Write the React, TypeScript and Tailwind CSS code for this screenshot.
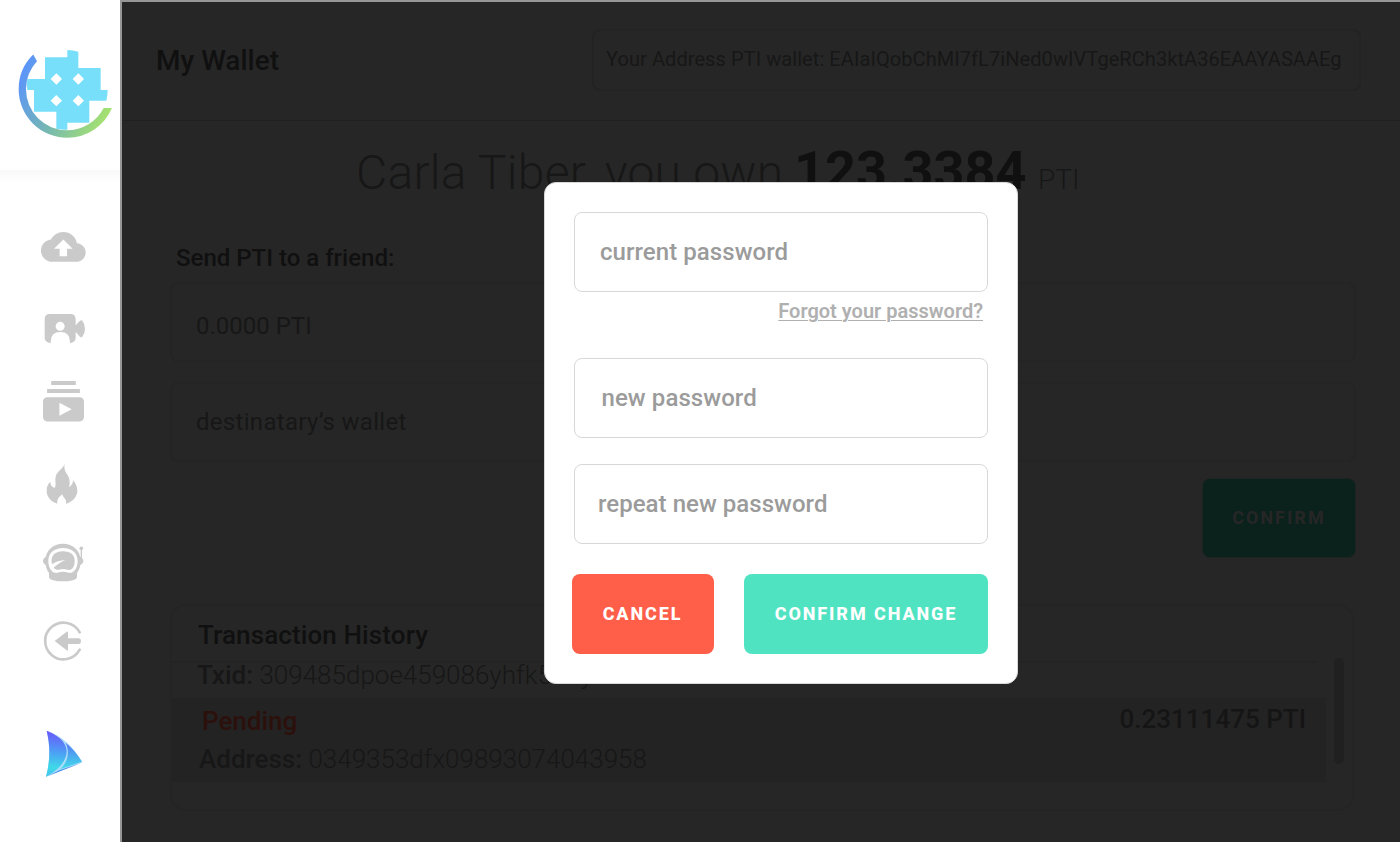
import React from "react";

const GREY = "#cacaca";

function Logo() {
  return (
    <svg width="120" height="110" viewBox="0 0 360 330">
      <defs>
        <linearGradient id="ring" gradientUnits="userSpaceOnUse" x1="60" y1="130" x2="330" y2="260">
          <stop offset="0" stopColor="#5b94fb" />
          <stop offset="0.5" stopColor="#76b8b0" />
          <stop offset="1" stopColor="#a8e46c" />
        </linearGradient>
      </defs>
      <path
        fill="#78dffa"
        d="M202 60Q219 60 235 65V114H302V180H323Q323 197 319 212H268V278H202V299Q185 300 169 296V245H102V180H82Q79 163 82 147H135V82H202Z"
      />
      <path
        fill="#fff"
        d="M169 130l17 17-17 17-17-17zM235 130l17 17-17 17-17-17zM169 195l17 17-17 17-17-17zM235 195l17 17-17 17-17-17z"
      />
      <path fill="url(#ring)" d="M99.700 73.700A145 145 0 0 0 56 178A145 145 0 0 0 201 323A145 145 0 0 0 335.900 234H311A124 124 0 0 1 201 301A123 123 0 0 1 78 178A123 123 0 0 1 111 94Z" />
    </svg>
  );
}

function UploadIcon() {
  return (
    <svg className="ml-[40.7px] overflow-visible" width="44.7" height="29.8" viewBox="0 4 24 16" fill={GREY}>
      <path d="M19.35 10.04C18.67 6.59 15.64 4 12 4 9.11 4 6.6 5.64 5.35 8.04 2.34 8.36 0 10.91 0 14c0 3.31 2.69 6 6 6h13c2.76 0 5-2.24 5-5 0-2.64-2.05-4.78-4.65-4.96zM14 13v4h-4v-4H7l5-5 5 5h-3z" />
    </svg>
  );
}

function CameraIcon() {
  return (
    <svg className="ml-[44px] overflow-visible" width="42" height="30" viewBox="72 296 126 90" fill={GREY}>
      <path d="M90 296H151Q167 296 167 312V330L180 316Q184 313 187 316Q195 326 195 340T187 364Q184 368 180 364L167 350V368Q167 380 150 384V379Q150 350 121 350T92 379V384Q74 380 74 368V312Q74 296 90 296Z" />
      <circle cx="120.500" cy="333" r="13.500" fill="#fff" />
    </svg>
  );
}

function SubscriptionsIcon() {
  return (
    <svg className="ml-[42.5px] overflow-visible" width="41" height="40.400" viewBox="2 2 20 20" preserveAspectRatio="none" fill={GREY}>
      <path d="M20 8H4V6h16v2zm-2-6H6v2h12V2zm4 10v8c0 1.1-.9 2-2 2H4c-1.1 0-2-.9-2-2v-8c0-1.1.9-2 2-2h16c1.1 0 2 .9 2 2zm-6 4l-6-3.270v6.530L16 16z" />
    </svg>
  );
}

function FireIcon() {
  return (
    <svg className="ml-[46px] overflow-visible" width="32" height="40" viewBox="78 42 96 120" fill={GREY}>
      <path d="M134 42C131 54 135 64 142 74C150 86 151 100 147 112C154 108 159 101 159 91C167 99 172 110 172 122C172 140 157 156 138 161C142 148 129 144 127 133C117 140 110 149 112 161C93 156 80 141 80 121C80 110 84 101 91 95C91 104 95 111 104 114C110 104 104 92 107 80C110 64 128 58 134 42Z" />
    </svg>
  );
}

function AstronautIcon() {
  return (
    <svg className="ml-[42px] overflow-visible" width="42" height="39" viewBox="66 280 126 117">
      <g fill={GREY}>
        <path d="M80 320Q69 326 69 334T80 347ZM178 320Q190 326 190 334T178 347Z" />
        <path d="M129 282C159 282 182 304 182 333C182 349 178 360 171 370V381C171 391 150 395 129 395S87 391 87 381V370C80 360 76 349 76 333C76 304 99 282 129 282Z" />
        <circle cx="184" cy="296" r="5.500" />
        <path d="M182 298h4v30h-4z" />
      </g>
      <path
        fill="#fff"
        d="M129 295C155 295 173 310 173 334C173 352 165 366 154 369C146 371 140 366 129 366S112 371 104 369C93 366 85 352 85 334C85 310 103 295 129 295Z"
      />
      <path
        fill={GREY}
        d="M129 305C153 305 164 317 164 334C164 350 157 361 148 361C142 361 138 358 129 358C116 359 110 364 101 354C111 345 121 338 136 331C121 332 107 336 96 344C90 321 103 305 129 305Z"
      />
    </svg>
  );
}

function LogoutIcon() {
  return (
    <svg className="ml-[43px] overflow-visible" width="40" height="40" viewBox="69 514 120 120">
      <path d="M179 548A55 55 0 1 0 179 600" fill="none" stroke={GREY} strokeWidth="8" strokeLinecap="round" />
      <path fill={GREY} d="M104 574L140 546Q144 544 144 549V566H177Q183 567 183 574.500T177 583H144V599Q144 605 140 602Z" />
    </svg>
  );
}

function SailIcon() {
  return (
    <svg className="ml-[45px] overflow-visible" width="39" height="48" viewBox="75 60 117 144">
      <defs>
        <linearGradient id="sail" x1="0.400" y1="0" x2="0.350" y2="1">
          <stop offset="0" stopColor="#6c55fb" />
          <stop offset="0.450" stopColor="#4d9df5" />
          <stop offset="0.800" stopColor="#3fd9e8" />
          <stop offset="1" stopColor="#42c4ee" />
        </linearGradient>
        <linearGradient id="jib" x1="0" y1="0" x2="0" y2="1">
          <stop offset="0" stopColor="#5876f6" />
          <stop offset="1" stopColor="#3fdde8" />
        </linearGradient>
      </defs>
      <path fill="#a8dcf8" d="M80 62C128 78 162 112 187 157L78 201C91 150 91 110 80 62Z" />
      <path fill="url(#sail)" d="M80 62C113 76 139 94 140 124C140 154 112 182 78 200C91 150 91 110 80 62Z" />
      <path fill="url(#jib)" d="M137 98C157 114 173 133 186 155L121 177C142 158 151 128 137 98Z" />
      <path fill="#4b8cf0" d="M84 198L118 181L186 158L120 184Z" />
    </svg>
  );
}

function Sidebar() {
  return (
    <aside className="flex h-full w-[120px] shrink-0 flex-col bg-white">
      <div className="h-[170px] pt-[30px]">
        <Logo />
      </div>
      <div className="h-[12px] bg-gradient-to-b from-[#f8f8f8] to-white" />
      <nav className="flex flex-col">
        <div className="h-[132px] pt-[49.700px]"><UploadIcon /></div>
        <div className="h-[67.300px]"><CameraIcon /></div>
        <div className="h-[82.700px]"><SubscriptionsIcon /></div>
        <div className="h-[79.300px]"><FireIcon /></div>
        <div className="h-[78px]"><AstronautIcon /></div>
        <div className="h-[108.700px]"><LogoutIcon /></div>
        <div><SailIcon /></div>
      </nav>
    </aside>
  );
}

function Wallet() {
  return (
    <main className="flex h-full flex-1 flex-col overflow-hidden border-l-2 border-t-2 border-[#969696] bg-[#262626] whitespace-nowrap">
      <header className="flex h-[119px] shrink-0 items-center justify-between border-b border-[#202020] pr-[39px] pb-[2px] pl-[34px]">
        <h1 className="pt-[2px] text-[28px] font-medium leading-8 text-[#101010]">My Wallet</h1>
        <div className="flex h-[62px] w-[769px] items-center rounded-lg border-2 border-[#232323] pb-[2px] pl-[12px] text-[20px] tracking-[0.075px] text-[#171717]">
          Your Address PTI wallet: EAIaIQobChMI7fL7iNed0wIVTgeRCh3ktA36EAAYASAAEg
        </div>
      </header>
      <div className="flex h-[110px] shrink-0 items-baseline pt-[18px] pl-[234px] text-[#171717]">
        <span className="w-[438px] text-[48px] font-light leading-[62px] tracking-[0.250px]">Carla Tiber, you own</span>
        <span className="w-[244px] text-[54px] font-bold leading-[64px] text-[#101010]">123.3384</span>
        <span className="text-[28px] font-light">PTI</span>
      </div>
      <section className="flex flex-col pr-[44px] pl-[48px]">
        <h2 className="h-[51px] pt-[11px] pl-[6px] text-[24px] font-medium leading-8 text-[#101010]">Send PTI to a friend:</h2>
        <div className="flex h-[80px] items-center rounded-lg border-2 border-[#242424] pt-[8px] pl-6 text-[24px] text-[#171717]">0.0000 PTI</div>
        <div className="mt-5 flex h-[80px] items-center rounded-lg border-2 border-[#242424] pl-6 text-[24px] tracking-[0.300px] text-[#171717]">destinatary’s wallet</div>
        <button className="mt-[16px] flex h-[80px] w-[154px] items-center justify-center self-end rounded-lg border border-[#1d2423] bg-[#0a211c] pb-[2px] text-[18px] font-extrabold tracking-[2px] text-[#262626]">CONFIRM</button>
      </section>
      <section className="mt-[46px] ml-[48px] flex h-[207px] w-[1184px] shrink-0 rounded-2xl border-2 border-[#242424]">
        <div className="w-[1154px]">
          <h2 className="h-[57px] w-[1144px] border-b-2 border-[#232323] pt-[13px] pl-[26px] text-[26px] font-medium leading-8 tracking-[0.120px] text-[#101010]">Transaction History</h2>
          <p className="h-[35px] pl-[25px] text-[26px] font-light leading-[24px] text-[#171717]">
            <span className="font-medium">Txid:</span> 309485dpoe459086yhfk5n4y
          </p>
          <div className="h-[84px] bg-[#232323] pl-[27px]">
            <div className="flex h-[42px] justify-between pt-[7px] pr-5 pl-[3px]">
              <span className="text-[26px] font-medium leading-8 text-[#2c100c]">Pending</span>
              <span className="-mt-[2px] text-[26px] font-medium leading-8 text-[#151515]">0.23111475 PTI</span>
            </div>
            <p className="pt-[3px] text-[26px] font-light leading-8 text-[#171717]">
              <span className="font-medium">Address:</span> 0349353dfx09893074043958
            </p>
          </div>
        </div>
        <div className="mt-[52px] ml-2 h-[106px] w-[10px] rounded-full bg-[#202020]" />
      </section>
    </main>
  );
}

function PasswordModal() {
  return (
    <div className="absolute top-[182px] left-[544px] flex h-[502px] w-[474px] flex-col rounded-xl border border-[#d8d8d8] bg-white px-[29px] pt-[29px] whitespace-nowrap">
      <div className="flex h-[80px] items-center rounded-lg border border-[#d8d8d8] pl-[25px] text-[24px] font-medium tracking-[0.060px] text-[#9b9b9b]">current password</div>
      <div className="flex h-[66px] justify-end pt-[7px] pr-[5px]">
        <a className="text-[20px] font-semibold leading-6 text-[#b0b0b0] underline decoration-1 underline-offset-2">Forgot your password?</a>
      </div>
      <div className="flex h-[80px] items-center rounded-lg border border-[#d8d8d8] pl-[26.500px] text-[24px] font-medium tracking-[0.080px] text-[#9b9b9b]">new password</div>
      <div className="mt-[26px] flex h-[80px] items-center rounded-lg border border-[#d8d8d8] pl-[23px] text-[24px] font-medium tracking-[0.040px] text-[#9b9b9b]">repeat new password</div>
      <div className="mt-[30px] -ml-[2px] flex gap-[30px] text-[18px] font-extrabold text-white">
        <button className="h-[80px] w-[142px] rounded-lg bg-[#ff5e48] pr-[1px] pb-[2px] tracking-[1.900px]">CANCEL</button>
        <button className="h-[80px] w-[244px] rounded-lg bg-[#50e3c2] pb-[2px] tracking-[1.900px]">CONFIRM CHANGE</button>
      </div>
    </div>
  );
}

export default function App() {
  return (
    <div className="relative flex h-[842px] w-[1400px] overflow-hidden bg-white font-[Roboto,sans-serif]">
      <Sidebar />
      <Wallet />
      <PasswordModal />
    </div>
  );
}
